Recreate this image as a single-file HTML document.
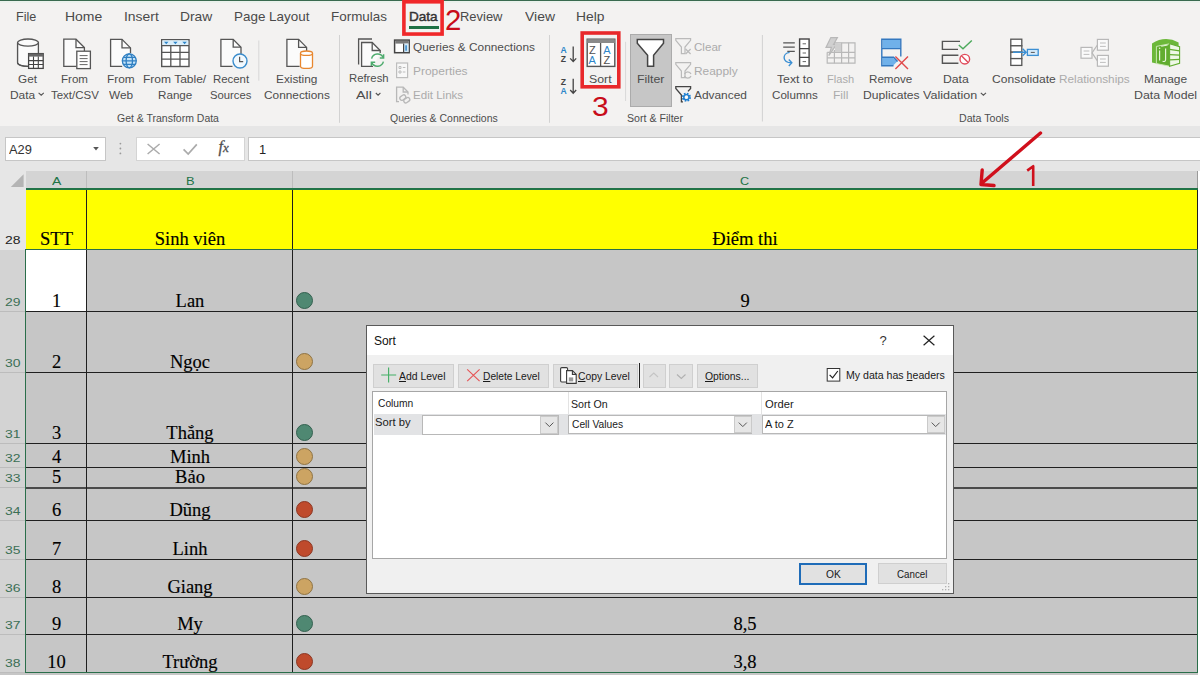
<!DOCTYPE html>
<html><head><meta charset="utf-8">
<style>
*{margin:0;padding:0;box-sizing:border-box}
html,body{width:1200px;height:675px;overflow:hidden;background:#fff;font-family:"Liberation Sans",sans-serif;position:relative}
.a{position:absolute}
.x{position:absolute;white-space:nowrap}
.c{position:absolute;width:300px;text-align:center;font-family:"Liberation Serif",serif;font-size:18.5px;line-height:18.5px;color:#000;white-space:nowrap;-webkit-text-stroke:0.15px #000}
.hl{position:absolute;height:1px;background:#1f1f1f}
.vl{position:absolute;width:1px;background:#1f1f1f}
.dot{position:absolute;width:17px;height:17px;border-radius:50%}
.g{background:#4f8872;border:1px solid #33604f}
.t{background:#cca463;border:1px solid #8f7343}
.r{background:#bf4a2c;border:1px solid #8c3622}
.btn{position:absolute;background:#e1e1e1;border:1px solid #cfcfcf}
svg{position:absolute;overflow:visible}
</style></head><body>
<!-- ribbon -->
<div class="a" style="left:0;top:0;width:1200px;height:126px;background:#f3f2f1"></div>
<div class="a" style="left:0;top:0;width:1200px;height:1px;background:#3a6a50"></div>
<div class="a" style="left:0;top:1px;width:1200px;height:2px;background:#eaf1ec"></div>
<div class="a" style="left:409px;top:26px;width:30px;height:3px;background:#1e7145"></div>
<div class="a" style="left:630px;top:33.5px;width:42px;height:73.5px;background:#c6c6c6;border:1px solid #ababab"></div>

<svg style="left:0;top:0" width="1200" height="126" viewBox="0 0 1200 126">
<g fill="none" stroke-linejoin="miter">
<!-- separators -->
<path d="M258.8 40.5 V80.7 M625.6 41.8 V101" stroke="#d8d8d8" stroke-width="1"/>
<path d="M339.5 35 V122.8 M549.5 35 V122.8 M762.4 35 V121.5" stroke="#d2d2d2" stroke-width="1"/>

<!-- Get Data -->
<g stroke="#555" stroke-width="1.3">
<path d="M17.6 42.6 V62.8 A10.4 3.6 0 0 0 28 66.4" fill="#fbfbfb"/>
<path d="M17.6 42.6 V62.8 H28 V53.2 H38.4 V42.6 Z" fill="#fbfbfb" stroke="none"/>
<path d="M17.6 42.6 V62.8 A10.4 3.6 0 0 0 28 66.4 M38.4 42.6 V53"/>
<ellipse cx="28" cy="42.6" rx="10.4" ry="3.6" fill="#fbfbfb"/>
<rect x="28.6" y="53.6" width="14.6" height="14.8" fill="#fff" stroke="#444"/>
<rect x="28.6" y="53.6" width="14.6" height="3" fill="#666" stroke="none"/>
<path d="M33.5 56.6 V68.4 M38.3 56.6 V68.4 M28.6 60.6 H43.2 M28.6 64.5 H43.2" stroke="#444" stroke-width="1.1"/>
</g>

<!-- Text/CSV -->
<g stroke="#555" stroke-width="1.3">
<path d="M76.4 66.4 H63.8 V39.2 H76 L84.4 47.6 V51" fill="#fbfbfb"/>
<path d="M76 39.2 V47.6 H84.4"/>
<rect x="76.8" y="51.2" width="13.6" height="17.4" fill="#fff"/>
<path d="M79.6 55.6 H87.6 M79.6 58.6 H87.6 M79.6 61.6 H87.6 M79.6 64.6 H87.6" stroke="#666" stroke-width="1"/>
</g>

<!-- From Web -->
<g stroke="#555" stroke-width="1.3">
<path d="M122.2 66.4 H110.6 V39.4 H122 L130.5 47.9 V53" fill="#fbfbfb"/>
<path d="M122 39.4 V47.9 H130.5"/>
</g>
<g stroke="#2f7fc2" stroke-width="1.3">
<circle cx="129.3" cy="60.8" r="7" fill="#c4e3f8"/>
<ellipse cx="129.3" cy="60.8" rx="3.2" ry="7"/>
<path d="M122.3 60.8 H136.3 M123.3 57.3 H135.3 M123.3 64.3 H135.3"/>
</g>

<!-- From Table -->
<g stroke="#555" stroke-width="1.4">
<rect x="161.7" y="39.7" width="27.3" height="26.8" fill="#fff"/>
<rect x="162.4" y="40.4" width="25.9" height="5" fill="#d9eefb" stroke="none"/>
<path d="M161.7 45.7 H189 M161.7 52.3 H189 M161.7 59.2 H189 M170.8 45.7 V66.5 M180 45.7 V66.5" stroke-width="1.3"/>
</g>
<path d="M164 41.8 H168.5 L166.25 44.3 Z M173.15 41.8 H177.65 L175.4 44.3 Z M182.35 41.8 H186.85 L184.6 44.3 Z" fill="#2f86c9"/>

<!-- Recent Sources -->
<g stroke="#555" stroke-width="1.3">
<path d="M232.5 66.4 H220.9 V39.4 H233.2 L241 47.2 V54" fill="#fbfbfb"/>
<path d="M233.2 39.4 V47.2 H241"/>
</g>
<circle cx="240" cy="61" r="7" fill="#f2f9fe" stroke="#3a8ccc" stroke-width="1.4"/>
<path d="M239.6 56.8 V61.6 H243.2" stroke="#555" stroke-width="1.2"/>

<!-- Existing Connections -->
<g stroke="#555" stroke-width="1.3">
<path d="M299.6 66.4 H286.9 V39.4 H298.6 L306.6 47.4 V51.5" fill="#fbfbfb"/>
<path d="M298.6 39.4 V47.4 H306.6"/>
</g>
<g stroke="#e8872f" stroke-width="1.3" fill="#fff">
<path d="M300.5 53.2 V66.2 A6 2.2 0 0 0 312.5 66.2 V53.2"/>
<ellipse cx="306.5" cy="53.2" rx="6" ry="2.2"/>
</g>

<!-- Refresh All -->
<g stroke="#555" stroke-width="1.3">
<path d="M358.6 64.6 V39 H372"/>
<path d="M373 66.4 H361.6 V42.5 H372.2 L380.2 50.5 V53" fill="#fbfbfb"/>
<path d="M372.2 42.5 V50.5 H380.2"/>
</g>
<g stroke="#4dab6d" stroke-width="1.5" fill="none">
<path d="M371.6 58.6 A6.2 6.2 0 0 1 383.2 57.6"/>
<path d="M383.4 61.6 A6.2 6.2 0 0 1 371.8 62.6"/>
<path d="M383.6 54.2 V58 H379.8 M371.4 66 V62.2 H375.2"/>
</g>

<!-- Queries & Connections -->
<g stroke="#444" stroke-width="1.5">
<rect x="394.6" y="40.1" width="14.6" height="12.6" fill="#fff"/>
<rect x="395.3" y="40.8" width="13.2" height="2.8" fill="#7a7a7a" stroke="none"/>
<rect x="403.6" y="43.6" width="4.9" height="8.4" fill="#cfe7f7" stroke="none"/>
<path d="M403.6 43.6 V52.7" stroke-width="1.2"/>
</g>
<rect x="405.3" y="45.3" width="1.6" height="5.4" fill="#3a8ccc"/>
<!-- Properties (gray) -->
<g stroke="#bdbdbd" stroke-width="1.2">
<rect x="396.6" y="63" width="11" height="14.6" fill="#f8f8f8"/>
<path d="M399 66.5 h2 v2 h-2z M399 71 h2 v2 h-2z M402.8 67.5 h2.6 M402.8 72 h2.6" stroke-width="1"/>
</g>
<!-- Edit Links (gray) -->
<g stroke="#b8b8b8" stroke-width="1.3" fill="none">
<path d="M399 101.6 H396.6 V87.2 H403.2 L408 92 V94.5"/>
<path d="M403.2 87.2 V92 H408"/>
<rect x="399.6" y="95.6" width="6.4" height="4" rx="2" transform="rotate(-35 402.8 97.6)"/>
<rect x="403.6" y="98.2" width="6.4" height="4" rx="2" transform="rotate(-35 406.8 100.2)"/>
</g>
<!-- AZ / ZA -->
<g font-family="Liberation Sans" font-size="8.6" font-weight="bold">
<text x="560.6" y="53.4" fill="#2e86c9">A</text>
<text x="560.8" y="62.3" fill="#444">Z</text>
<text x="560.8" y="85.1" fill="#444">Z</text>
<text x="560.6" y="94.3" fill="#2e86c9">A</text>
</g>
<path d="M573.2 46.6 V61.4 M570.2 58.4 L573.2 61.6 L576.2 58.4 M573.2 78.8 V93 M570.2 90 L573.2 93.2 L576.2 90" stroke="#444" stroke-width="1.3" fill="none"/>

<!-- Sort icon -->
<rect x="587.2" y="39.2" width="27.6" height="27.2" fill="#fff" stroke="#555" stroke-width="1.4"/>
<rect x="587.2" y="39.2" width="27.6" height="3.8" fill="#8a8a8a"/>
<path d="M600.6 43 V66.4" stroke="#555" stroke-width="1.3"/>
<g font-family="Liberation Sans" font-size="11">
<text x="589" y="53.9" fill="#505050">Z</text>
<text x="588.6" y="63.9" fill="#2e86c9">A</text>
<text x="603.2" y="53.9" fill="#2e86c9">A</text>
<text x="603.6" y="63.9" fill="#505050">Z</text>
</g>

<!-- Filter funnel -->
<path d="M637.3 39.6 H663.5 V43.2 L653.6 55.2 V66.2 H647.6 V55.2 L637.3 43.2 Z" fill="#fff" stroke="#444" stroke-width="1.5"/>
<!-- Clear (gray) -->
<g stroke="#bababa" stroke-width="1.2" fill="none">
<path d="M675.8 38.6 H690.6 V40.4 L685 47 V53.6 H681.4 V47 L675.8 40.4 Z"/>
<path d="M685.6 49 L690.6 54 M690.6 49 L685.6 54"/>
</g>
<!-- Reapply (gray) -->
<g stroke="#bababa" stroke-width="1.2" fill="none">
<path d="M675.8 62.6 H690.6 V64.4 L685 71 V77.6 H681.4 V71 L675.8 64.4 Z"/>
<path d="M684.5 74 a3.5 3.5 0 0 1 6.5 0 M691 76 a3.5 3.5 0 0 1 -6.5 0"/>
</g>
<!-- Advanced -->
<g stroke="#444" stroke-width="1.3" fill="none">
<path d="M683 101.8 H681.4 V95 L675.8 88.4 V86.6 H690.6 V88.4 L688 91.4"/>
</g>
<circle cx="686.4" cy="97.2" r="3.4" fill="none" stroke="#1f7fd0" stroke-width="2.4" stroke-dasharray="1.5 1.17"/>
<circle cx="686.4" cy="97.2" r="2.6" fill="none" stroke="#1f7fd0" stroke-width="1.4"/>
<circle cx="686.4" cy="97.2" r="1" fill="#fff"/>

<!-- Text to Columns -->
<path d="M783.2 42.8 H794.8 M783.2 47.1 H794.8 M787.3 51.3 H794.8" stroke="#555" stroke-width="1.3"/>
<rect x="799.6" y="39" width="9.5" height="27" fill="#fff" stroke="#444" stroke-width="1.4"/>
<path d="M799.6 48.6 H809.1 M799.6 57.3 H809.1" stroke="#444" stroke-width="1.2"/>
<path d="M802.6 43.8 H806 M802.6 53 H806 M802.6 61.6 H806" stroke="#666" stroke-width="1"/>
<path d="M789.6 52.4 C782 53.5 782 62.8 791.5 62.8 M788.8 59.6 L791.8 62.8 L788.8 66" stroke="#3b8fd3" stroke-width="1.4" fill="none"/>

<!-- Flash Fill (gray) -->
<g stroke="#b8b8b8" stroke-width="1.2" fill="none">
<path d="M832 42.8 H855 V63.2 H827.2 V52.3" />
<path d="M827.2 52.3 H855 M827.2 57.8 H855 M841.6 42.8 V63.2 M848.6 42.8 V63.2 M834.4 50 V63.2"/>
<path d="M830.8 37.6 H837.4 L833.6 44.4 H836.6 L828.8 55.6 L831.4 47.4 H826 Z" fill="#d0d0d0"/>
<rect x="835" y="43.5" width="6.2" height="8.4" fill="#cfcfcf" stroke="none"/>
</g>

<!-- Remove Duplicates -->
<rect x="882.5" y="39.9" width="17.6" height="8.6" fill="#70b1ea"/>
<path d="M882.5 57.9 H893.2 L897.2 61.6 L893.2 65.4 H882.5 Z" fill="#70b1ea"/>
<path d="M893.5 65.8 H881.8 V39.2 H900.8 V56.4 M881.8 48.6 H900.8 M881.8 57.3 H893.6 L897.6 61.6" stroke="#3478bf" stroke-width="1.4" fill="none"/>
<path d="M895.4 56.6 L908 69 M908 56.6 L895.4 69" stroke="#e0494a" stroke-width="1.4"/>

<!-- Data Validation -->
<path d="M960 41.4 H942.4 V49.4 H958" stroke="#555" stroke-width="1.4" fill="none"/>
<path d="M958.4 55.2 H942.4 V63.2 H958.4" stroke="#555" stroke-width="1.4" fill="none"/>
<path d="M958.8 45 L963 48.8 L971.8 40.4" stroke="#4caa5c" stroke-width="1.4" fill="none"/>
<circle cx="964.8" cy="59.2" r="4.8" fill="#fff" stroke="#e04a5a" stroke-width="1.4"/>
<path d="M961.4 55.8 L968.2 62.6" stroke="#e04a5a" stroke-width="1.4"/>

<!-- Consolidate -->
<g stroke="#555" stroke-width="1.3" fill="#fff">
<rect x="1010.8" y="39.2" width="11" height="6.6"/>
<rect x="1010.8" y="45.8" width="11" height="6.4"/>
<rect x="1010.8" y="52.2" width="11" height="6.4"/>
<rect x="1010.8" y="58.6" width="11" height="6.8"/>
</g>
<path d="M1013 52.3 H1026 M1022.6 48.8 L1026.2 52.3 L1022.6 55.8" stroke="#3b8fd3" stroke-width="1.4" fill="none"/>
<rect x="1027.4" y="49.4" width="10.8" height="6" fill="#d6ebfa" stroke="#3b8fd3" stroke-width="1.3"/>
<path d="M1030.8 52.4 H1034.8" stroke="#555" stroke-width="1"/>

<!-- Relationships (gray) -->
<g stroke="#b8b8b8" stroke-width="1.2" fill="#fafafa">
<rect x="1081" y="47.4" width="11" height="10.8"/>
<rect x="1097.4" y="39.4" width="11" height="10.8"/>
<rect x="1097.4" y="55.4" width="11" height="10.8"/>
<path d="M1092 52.8 L1097.4 45 M1092 52.8 L1097.4 60.8" fill="none"/>
<path d="M1083.6 51 h5.8 M1083.6 54.4 h5.8 M1100 43 h5.8 M1100 46.4 h5.8 M1100 59 h5.8 M1100 62.4 h5.8" fill="none" stroke-width="0.9"/>
</g>

<!-- Manage Data Model -->
<path d="M1152 62.5 V43.5 Q1165 35.2 1178.6 42.4 V47.2 L1169.6 43.8 L1156.4 46.4 V63.6 Z" fill="#6cb83a"/>
<path d="M1156.4 46.4 L1169.6 43.8 V66.2 L1156.4 63.6 Z" fill="#62ad30" stroke="#cdebb6" stroke-width="0.9"/>
<path d="M1169.6 43.8 L1179.6 46.6 V63.4 L1169.6 66.2 Z" fill="#eef8e6" stroke="#62ad30" stroke-width="1.1"/>
<path d="M1169.6 49.4 L1179.6 50.8 M1169.6 54.6 L1179.6 55.2 M1169.6 59.8 L1179.6 59.4" stroke="#62ad30" stroke-width="1.3"/>
<path d="M1159.6 50.6 V60.4 M1165.6 48.6 V59.6 Q1165.6 62 1162.6 61.4" stroke="#e6f5da" stroke-width="1.2" fill="none"/>
<circle cx="1159.6" cy="48.3" r="0.8" fill="#e6f5da"/>
<path d="M1161.2 46.2 L1167.6 45" stroke="#e6f5da" stroke-width="1.1"/>

<!-- chevrons -->
<path d="M38.6 92.8 L41.2 95.2 L43.8 92.8 M375.8 93 L378.1 95.2 L380.4 93 M980.8 92.8 L983.4 95.2 L986 92.8" stroke="#555" stroke-width="1.1" fill="none"/>
</g>
<!-- red annotation boxes -->
<rect x="403.9" y="1.8" width="38.2" height="32.25" fill="none" stroke="#f0282a" stroke-width="3.6"/>
<rect x="582.2" y="33" width="36.6" height="53.8" fill="none" stroke="#e8282b" stroke-width="3.6"/>
</svg>

<!-- formula bar area -->
<div class="a" style="left:0;top:126px;width:1200px;height:45px;background:#e6e6e6"></div>
<div class="a" style="left:5px;top:137px;width:100.5px;height:24px;background:#fff;border:1px solid #c6c6c6"></div>
<svg style="left:0;top:0" width="1" height="1"><path d="M93.2 147 H98.8 L96 150.4 Z" fill="#555"/></svg>
<svg style="left:0;top:0" width="1" height="1"><g fill="#9a9a9a"><circle cx="120.4" cy="143.6" r="0.9"/><circle cx="120.4" cy="148.5" r="0.9"/><circle cx="120.4" cy="153.4" r="0.9"/></g></svg>
<div class="a" style="left:135.6px;top:137px;width:109px;height:24px;background:#fff;border:1px solid #d4d4d4"></div>
<div class="a" style="left:247.5px;top:137px;width:953px;height:24px;background:#fff;border:1px solid #c6c6c6;border-right:none"></div>
<svg style="left:0;top:0" width="1" height="1">
<path d="M147.6 144 L159.6 154 M159.6 144 L147.6 154" stroke="#ababab" stroke-width="1.5"/>
<path d="M183.6 149.4 L188.2 154 L196.8 144.4" stroke="#ababab" stroke-width="1.7" fill="none"/>
</svg>
<div class="x" style="left:218.5px;top:139px;font-family:'Liberation Serif';font-style:italic;font-size:16px;color:#505050;line-height:16px;-webkit-text-stroke:0.3px #505050">f<span style="font-size:13px">x</span></div>

<!-- sheet -->
<div class="a" style="left:0;top:171px;width:1200px;height:504px;background:#c6c6c6"></div>
<div class="a" style="left:0;top:171px;width:26px;height:79px;background:#e6e6e6"></div>
<div class="a" style="left:26px;top:171px;width:1172px;height:17px;background:#d4d4d4"></div>
<svg style="left:0;top:0" width="1" height="1"><path d="M23.6 174.2 V187 H10.8 Z" fill="#b4b4b4"/></svg>
<div class="a" style="left:26px;top:188px;width:1172px;height:2px;background:#217346"></div>
<div class="a" style="left:86px;top:171px;width:1px;height:17px;background:#bdbdbd"></div>
<div class="a" style="left:292px;top:171px;width:1px;height:17px;background:#bdbdbd"></div>
<div class="a" style="left:1197px;top:171px;width:1px;height:17px;background:#9a9a9a"></div>
<div class="a" style="left:1198px;top:171px;width:2px;height:504px;background:#fff"></div>
<div class="a" style="left:26px;top:190px;width:1172px;height:59px;background:#ffff00"></div>
<div class="a" style="left:0;top:250px;width:25px;height:62px;background:#d3d3d3;border-bottom:1px solid #bcbcbc"></div>
<div class="a" style="left:0;top:312px;width:25px;height:61px;background:#d3d3d3;border-bottom:1px solid #bcbcbc"></div>
<div class="a" style="left:0;top:373px;width:25px;height:71px;background:#d3d3d3;border-bottom:1px solid #bcbcbc"></div>
<div class="a" style="left:0;top:444px;width:25px;height:24px;background:#d3d3d3;border-bottom:1px solid #bcbcbc"></div>
<div class="a" style="left:0;top:468px;width:25px;height:20px;background:#d3d3d3;border-bottom:1px solid #bcbcbc"></div>
<div class="a" style="left:0;top:488px;width:25px;height:33px;background:#d3d3d3;border-bottom:1px solid #bcbcbc"></div>
<div class="a" style="left:0;top:521px;width:25px;height:39px;background:#d3d3d3;border-bottom:1px solid #bcbcbc"></div>
<div class="a" style="left:0;top:560px;width:25px;height:38px;background:#d3d3d3;border-bottom:1px solid #bcbcbc"></div>
<div class="a" style="left:0;top:598px;width:25px;height:37px;background:#d3d3d3;border-bottom:1px solid #bcbcbc"></div>
<div class="a" style="left:0;top:635px;width:25px;height:38px;background:#d3d3d3;border-bottom:1px solid #bcbcbc"></div>
<div class="a" style="left:26px;top:250px;width:60px;height:61px;background:#fff"></div>
<div class="dot g" style="left:295.5px;top:291.5px"></div>
<div class="hl" style="left:26px;top:311px;width:1171px"></div>
<div class="dot t" style="left:295.5px;top:352.5px"></div>
<div class="hl" style="left:26px;top:372px;width:1171px"></div>
<div class="dot g" style="left:295.5px;top:423.5px"></div>
<div class="hl" style="left:26px;top:443px;width:1171px"></div>
<div class="dot t" style="left:295.5px;top:447.5px"></div>
<div class="hl" style="left:26px;top:467px;width:1171px"></div>
<div class="dot t" style="left:295.5px;top:467.5px"></div>
<div class="hl" style="left:26px;top:487px;width:1171px;height:2px;background:#4a4a4a"></div>
<div class="dot r" style="left:295.5px;top:500.5px"></div>
<div class="hl" style="left:26px;top:520px;width:1171px"></div>
<div class="dot r" style="left:295.5px;top:539.5px"></div>
<div class="hl" style="left:26px;top:559px;width:1171px"></div>
<div class="dot t" style="left:295.5px;top:577.5px"></div>
<div class="hl" style="left:26px;top:597px;width:1171px"></div>
<div class="dot g" style="left:295.5px;top:614.5px"></div>
<div class="hl" style="left:26px;top:634px;width:1171px"></div>
<div class="dot r" style="left:295.5px;top:652.5px"></div>
<div class="vl" style="left:86px;top:190px;height:482px"></div>
<div class="vl" style="left:292px;top:190px;height:482px"></div>
<div class="a" style="left:1197px;top:190px;width:1px;height:60px;background:#1f1f1f"></div>
<div class="a" style="left:25px;top:249px;width:1173px;height:424px;border:1px solid #2a6e4a;border-top:1.5px solid #2a6e4a"></div>
<div class="c" style="left:-93.5px;top:230px">STT</div>
<div class="c" style="left:40px;top:230px">Sinh viên</div>
<div class="c" style="left:595px;top:230px">Điểm thi</div>
<div class="c" style="left:-93.5px;top:292px">1</div>
<div class="c" style="left:40px;top:292px">Lan</div>
<div class="c" style="left:595px;top:292px">9</div>
<div class="c" style="left:-93.5px;top:353px">2</div>
<div class="c" style="left:40px;top:353px">Ngọc</div>
<div class="c" style="left:-93.5px;top:424px">3</div>
<div class="c" style="left:40px;top:424px">Thắng</div>
<div class="c" style="left:-93.5px;top:448px">4</div>
<div class="c" style="left:40px;top:448px">Minh</div>
<div class="c" style="left:-93.5px;top:468px">5</div>
<div class="c" style="left:40px;top:468px">Bảo</div>
<div class="c" style="left:-93.5px;top:501px">6</div>
<div class="c" style="left:40px;top:501px">Dũng</div>
<div class="c" style="left:-93.5px;top:540px">7</div>
<div class="c" style="left:40px;top:540px">Linh</div>
<div class="c" style="left:-93.5px;top:578px">8</div>
<div class="c" style="left:40px;top:578px">Giang</div>
<div class="c" style="left:595px;top:578px">7</div>
<div class="c" style="left:-93.5px;top:615px">9</div>
<div class="c" style="left:40px;top:615px">My</div>
<div class="c" style="left:595px;top:615px">8,5</div>
<div class="c" style="left:-93.5px;top:653px">10</div>
<div class="c" style="left:40px;top:653px">Trường</div>
<div class="c" style="left:595px;top:653px">3,8</div>

<!-- dialog -->
<div class="a" style="left:366px;top:325px;width:588px;height:269px;background:#f0f0f0;border:1px solid #595959"></div>
<div class="a" style="left:367px;top:326px;width:586px;height:29px;background:#fff"></div>
<svg style="left:0;top:0" width="1" height="1"><path d="M923.6 335.8 L934.4 345.2 M934.4 335.8 L923.6 345.2" stroke="#222" stroke-width="1.2"/></svg>
<div class="btn" style="left:373px;top:363.5px;width:81px;height:24px"></div>
<div class="btn" style="left:457.5px;top:363.5px;width:91.5px;height:24px"></div>
<div class="btn" style="left:552.5px;top:363.5px;width:85.5px;height:24px"></div>
<div class="a" style="left:638.8px;top:363px;width:1.2px;height:25px;background:#222"></div>
<div class="btn" style="left:642.5px;top:363.5px;width:23.5px;height:24px"></div>
<div class="btn" style="left:669.3px;top:363.5px;width:24px;height:24px"></div>
<div class="btn" style="left:697.3px;top:363.5px;width:61px;height:24px"></div>
<svg style="left:0;top:0" width="1" height="1">
<path d="M388.6 367.6 V382.4 M381.2 375 H396.2" stroke="#45b066" stroke-width="1.15"/>
<path d="M467.2 369.4 L479.6 381.2 M479.6 369.4 L467.2 381.2" stroke="#e65557" stroke-width="1.15"/>
<g stroke="#3a3a3a" stroke-width="1.1" fill="#fff">
<rect x="560.6" y="367.6" width="7" height="14.4" rx="1.2"/>
<path d="M566.6 370.6 H572.4 L576.2 374.4 V383.4 H566.6 Z"/>
<path d="M572.4 370.6 V374.4 H576.2" fill="none"/>
</g>
<rect x="568.8" y="377.4" width="4.4" height="4" fill="#9a9a9a"/>
<path d="M649.5 377 L653.8 373 L658 377" stroke="#c4c4c4" stroke-width="1.1" fill="none"/>
<path d="M677 374.5 L681.3 378.5 L685.5 374.5" stroke="#b0b0b0" stroke-width="1.1" fill="none"/>
<rect x="827.2" y="368.5" width="12.6" height="12.6" fill="#fff" stroke="#333" stroke-width="1"/>
<path d="M829.6 374.8 L832.6 377.8 L837.8 371" stroke="#222" stroke-width="1.2" fill="none"/>
</svg>
<div class="a" style="left:372.4px;top:391.4px;width:575px;height:167.4px;background:#fff;border:1px solid #a6a6a6"></div>
<div class="a" style="left:567.6px;top:392.4px;width:1px;height:22px;background:#e3e3e3"></div>
<div class="a" style="left:761px;top:392.4px;width:1px;height:22px;background:#e3e3e3"></div>
<div class="a" style="left:374px;top:414.3px;width:572px;height:20.5px;background:#e2e3e5"></div>
<div class="a" style="left:422.2px;top:415.3px;width:136.8px;height:19.4px;background:#fff;border:1px solid #b8b8b8"></div>
<div class="a" style="left:540.4px;top:416.2px;width:18px;height:17.6px;background:#e6e6e6;border:1px solid #cacaca"></div>
<div class="a" style="left:568.4px;top:415px;width:183.2px;height:19.4px;background:#fff;border:1px solid #b8b8b8"></div>
<div class="a" style="left:734px;top:415.8px;width:17.6px;height:17.6px;background:#e6e6e6;border:1px solid #cacaca"></div>
<div class="a" style="left:762px;top:415px;width:183px;height:19.4px;background:#fff;border:1px solid #b8b8b8"></div>
<div class="a" style="left:926.7px;top:415.8px;width:18px;height:17.6px;background:#e6e6e6;border:1px solid #cacaca"></div>
<svg style="left:0;top:0" width="1" height="1">
<path d="M545.4 422.6 L549.4 426.6 L553.4 422.6 M738.8 422.6 L742.8 426.6 L746.8 422.6 M931.7 422.6 L935.7 426.6 L939.7 422.6" stroke="#555" stroke-width="1" fill="none"/>
</svg>
<div class="a" style="left:798.75px;top:563.2px;width:68px;height:21.4px;background:#e1e1e1;border:2px solid #1f6cb8"></div>
<div class="btn" style="left:878.3px;top:563.3px;width:68.4px;height:21.1px"></div>
<svg style="left:0;top:0" width="1" height="1"><g fill="#b0b0b0"><rect x="948" y="583" width="1.3" height="1.3"/><rect x="945" y="586" width="1.3" height="1.3"/><rect x="948" y="586" width="1.3" height="1.3"/><rect x="942" y="589" width="1.3" height="1.3"/><rect x="945" y="589" width="1.3" height="1.3"/><rect x="948" y="589" width="1.3" height="1.3"/></g></svg>

<div class="x" style="left:15.90px;top:10px;font-size:13.2px;line-height:13.2px;color:#4a4a4a;font-weight:normal;font-family:'Liberation Sans';transform:scaleX(0.9538);transform-origin:0 0;">File</div>
<div class="x" style="left:64.63px;top:10px;font-size:13.2px;line-height:13.2px;color:#4a4a4a;font-weight:normal;font-family:'Liberation Sans';transform:scaleX(1.0591);transform-origin:0 0;">Home</div>
<div class="x" style="left:123.83px;top:10px;font-size:13.2px;line-height:13.2px;color:#4a4a4a;font-weight:normal;font-family:'Liberation Sans';transform:scaleX(1.0541);transform-origin:0 0;">Insert</div>
<div class="x" style="left:179.84px;top:10px;font-size:13.2px;line-height:13.2px;color:#4a4a4a;font-weight:normal;font-family:'Liberation Sans';transform:scaleX(1.0483);transform-origin:0 0;">Draw</div>
<div class="x" style="left:234.06px;top:10px;font-size:13.2px;line-height:13.2px;color:#4a4a4a;font-weight:normal;font-family:'Liberation Sans';transform:scaleX(1.0176);transform-origin:0 0;">Page Layout</div>
<div class="x" style="left:331.35px;top:10px;font-size:13.2px;line-height:13.2px;color:#4a4a4a;font-weight:normal;font-family:'Liberation Sans';transform:scaleX(1.0182);transform-origin:0 0;">Formulas</div>
<div class="x" style="left:460.18px;top:10px;font-size:13.2px;line-height:13.2px;color:#4a4a4a;font-weight:normal;font-family:'Liberation Sans';transform:scaleX(0.9819);transform-origin:0 0;">Review</div>
<div class="x" style="left:524.63px;top:10px;font-size:13.2px;line-height:13.2px;color:#4a4a4a;font-weight:normal;font-family:'Liberation Sans';transform:scaleX(1.0567);transform-origin:0 0;">View</div>
<div class="x" style="left:576.14px;top:10px;font-size:13.2px;line-height:13.2px;color:#4a4a4a;font-weight:normal;font-family:'Liberation Sans';transform:scaleX(1.0495);transform-origin:0 0;">Help</div>
<div class="x" style="left:409.25px;top:10px;font-size:13.2px;line-height:13.2px;color:#333;font-weight:normal;font-family:'Liberation Sans';transform:scaleX(1.0290);transform-origin:0 0;-webkit-text-stroke:0.45px #333;">Data</div>
<div class="x" style="left:17.94px;top:73px;font-size:11.6px;line-height:11.6px;color:#4d4d4d;font-weight:normal;font-family:'Liberation Sans';transform:scaleX(1.0121);transform-origin:0 0;">Get</div>
<div class="x" style="left:9.83px;top:89px;font-size:11.6px;line-height:11.6px;color:#4d4d4d;font-weight:normal;font-family:'Liberation Sans';transform:scaleX(1.0291);transform-origin:0 0;">Data</div>
<div class="x" style="left:60.94px;top:73px;font-size:11.6px;line-height:11.6px;color:#4d4d4d;font-weight:normal;font-family:'Liberation Sans';transform:scaleX(0.9982);transform-origin:0 0;">From</div>
<div class="x" style="left:50.55px;top:89px;font-size:11.6px;line-height:11.6px;color:#4d4d4d;font-weight:normal;font-family:'Liberation Sans';transform:scaleX(0.9894);transform-origin:0 0;">Text/CSV</div>
<div class="x" style="left:106.83px;top:73px;font-size:11.6px;line-height:11.6px;color:#4d4d4d;font-weight:normal;font-family:'Liberation Sans';transform:scaleX(1.0241);transform-origin:0 0;">From</div>
<div class="x" style="left:109.03px;top:89px;font-size:11.6px;line-height:11.6px;color:#4d4d4d;font-weight:normal;font-family:'Liberation Sans';transform:scaleX(1.0200);transform-origin:0 0;">Web</div>
<div class="x" style="left:142.92px;top:73px;font-size:11.6px;line-height:11.6px;color:#4d4d4d;font-weight:normal;font-family:'Liberation Sans';transform:scaleX(1.0363);transform-origin:0 0;">From Table/</div>
<div class="x" style="left:157.84px;top:89px;font-size:11.6px;line-height:11.6px;color:#4d4d4d;font-weight:normal;font-family:'Liberation Sans';transform:scaleX(1.0041);transform-origin:0 0;">Range</div>
<div class="x" style="left:212.95px;top:73px;font-size:11.6px;line-height:11.6px;color:#4d4d4d;font-weight:normal;font-family:'Liberation Sans';transform:scaleX(0.9831);transform-origin:0 0;">Recent</div>
<div class="x" style="left:210.36px;top:89px;font-size:11.6px;line-height:11.6px;color:#4d4d4d;font-weight:normal;font-family:'Liberation Sans';transform:scaleX(0.9714);transform-origin:0 0;">Sources</div>
<div class="x" style="left:275.93px;top:73px;font-size:11.6px;line-height:11.6px;color:#4d4d4d;font-weight:normal;font-family:'Liberation Sans';transform:scaleX(1.0198);transform-origin:0 0;">Existing</div>
<div class="x" style="left:263.73px;top:89px;font-size:11.6px;line-height:11.6px;color:#4d4d4d;font-weight:normal;font-family:'Liberation Sans';transform:scaleX(1.0211);transform-origin:0 0;">Connections</div>
<div class="x" style="left:349.06px;top:72px;font-size:11.6px;line-height:11.6px;color:#4d4d4d;font-weight:normal;font-family:'Liberation Sans';transform:scaleX(0.9755);transform-origin:0 0;">Refresh</div>
<div class="x" style="left:355.91px;top:89px;font-size:11.6px;line-height:11.6px;color:#4d4d4d;font-weight:normal;font-family:'Liberation Sans';transform:scaleX(1.2423);transform-origin:0 0;">All</div>
<div class="x" style="left:412.93px;top:41px;font-size:11.6px;line-height:11.6px;color:#4d4d4d;font-weight:normal;font-family:'Liberation Sans';transform:scaleX(1.0225);transform-origin:0 0;">Queries &amp; Connections</div>
<div class="x" style="left:412.93px;top:65px;font-size:11.6px;line-height:11.6px;color:#ababab;font-weight:normal;font-family:'Liberation Sans';transform:scaleX(1.0316);transform-origin:0 0;">Properties</div>
<div class="x" style="left:412.94px;top:89px;font-size:11.6px;line-height:11.6px;color:#ababab;font-weight:normal;font-family:'Liberation Sans';transform:scaleX(0.9970);transform-origin:0 0;">Edit Links</div>
<div class="x" style="left:588.81px;top:73px;font-size:11.6px;line-height:11.6px;color:#4d4d4d;font-weight:normal;font-family:'Liberation Sans';transform:scaleX(1.0634);transform-origin:0 0;">Sort</div>
<div class="x" style="left:637.11px;top:73px;font-size:11.6px;line-height:11.6px;color:#4d4d4d;font-weight:normal;font-family:'Liberation Sans';transform:scaleX(1.0640);transform-origin:0 0;">Filter</div>
<div class="x" style="left:694.34px;top:41px;font-size:11.6px;line-height:11.6px;color:#ababab;font-weight:normal;font-family:'Liberation Sans';transform:scaleX(0.9998);transform-origin:0 0;">Clear</div>
<div class="x" style="left:694.33px;top:65px;font-size:11.6px;line-height:11.6px;color:#ababab;font-weight:normal;font-family:'Liberation Sans';transform:scaleX(1.0274);transform-origin:0 0;">Reapply</div>
<div class="x" style="left:694.33px;top:89px;font-size:11.6px;line-height:11.6px;color:#4d4d4d;font-weight:normal;font-family:'Liberation Sans';transform:scaleX(1.0259);transform-origin:0 0;">Advanced</div>
<div class="x" style="left:776.81px;top:73px;font-size:11.6px;line-height:11.6px;color:#4d4d4d;font-weight:normal;font-family:'Liberation Sans';transform:scaleX(1.0529);transform-origin:0 0;">Text to</div>
<div class="x" style="left:771.94px;top:89px;font-size:11.6px;line-height:11.6px;color:#4d4d4d;font-weight:normal;font-family:'Liberation Sans';transform:scaleX(1.0014);transform-origin:0 0;">Columns</div>
<div class="x" style="left:826.97px;top:73px;font-size:11.6px;line-height:11.6px;color:#ababab;font-weight:normal;font-family:'Liberation Sans';transform:scaleX(0.9561);transform-origin:0 0;">Flash</div>
<div class="x" style="left:832.72px;top:89px;font-size:11.6px;line-height:11.6px;color:#ababab;font-weight:normal;font-family:'Liberation Sans';transform:scaleX(1.0406);transform-origin:0 0;">Fill</div>
<div class="x" style="left:869.44px;top:73px;font-size:11.6px;line-height:11.6px;color:#4d4d4d;font-weight:normal;font-family:'Liberation Sans';transform:scaleX(1.0033);transform-origin:0 0;">Remove</div>
<div class="x" style="left:863.02px;top:89px;font-size:11.6px;line-height:11.6px;color:#4d4d4d;font-weight:normal;font-family:'Liberation Sans';transform:scaleX(1.0457);transform-origin:0 0;">Duplicates</div>
<div class="x" style="left:942.71px;top:73px;font-size:11.6px;line-height:11.6px;color:#4d4d4d;font-weight:normal;font-family:'Liberation Sans';transform:scaleX(1.0536);transform-origin:0 0;">Data</div>
<div class="x" style="left:922.60px;top:89px;font-size:11.6px;line-height:11.6px;color:#4d4d4d;font-weight:normal;font-family:'Liberation Sans';transform:scaleX(1.0829);transform-origin:0 0;">Validation</div>
<div class="x" style="left:991.82px;top:73px;font-size:11.6px;line-height:11.6px;color:#4d4d4d;font-weight:normal;font-family:'Liberation Sans';transform:scaleX(1.0405);transform-origin:0 0;">Consolidate</div>
<div class="x" style="left:1059.43px;top:73px;font-size:11.6px;line-height:11.6px;color:#ababab;font-weight:normal;font-family:'Liberation Sans';transform:scaleX(1.0159);transform-origin:0 0;">Relationships</div>
<div class="x" style="left:1144.43px;top:73px;font-size:11.6px;line-height:11.6px;color:#4d4d4d;font-weight:normal;font-family:'Liberation Sans';transform:scaleX(1.0288);transform-origin:0 0;">Manage</div>
<div class="x" style="left:1134.41px;top:89px;font-size:11.6px;line-height:11.6px;color:#4d4d4d;font-weight:normal;font-family:'Liberation Sans';transform:scaleX(1.0644);transform-origin:0 0;">Data Model</div>
<div class="x" style="left:117.30px;top:114px;font-size:10px;line-height:10px;color:#4d4d4d;font-weight:normal;font-family:'Liberation Sans';transform:scaleX(1.0483);transform-origin:0 0;">Get &amp; Transform Data</div>
<div class="x" style="left:389.90px;top:114px;font-size:10px;line-height:10px;color:#4d4d4d;font-weight:normal;font-family:'Liberation Sans';transform:scaleX(1.0478);transform-origin:0 0;">Queries &amp; Connections</div>
<div class="x" style="left:626.89px;top:114px;font-size:10px;line-height:10px;color:#4d4d4d;font-weight:normal;font-family:'Liberation Sans';transform:scaleX(1.0618);transform-origin:0 0;">Sort &amp; Filter</div>
<div class="x" style="left:959.49px;top:114px;font-size:10px;line-height:10px;color:#4d4d4d;font-weight:normal;font-family:'Liberation Sans';transform:scaleX(1.0612);transform-origin:0 0;">Data Tools</div>
<div class="x" style="left:9.38px;top:144px;font-size:12px;line-height:12px;color:#333;font-weight:normal;font-family:'Liberation Sans';transform:scaleX(1.0699);transform-origin:0 0;">A29</div>
<div class="x" style="left:258.78px;top:144px;font-size:12px;line-height:12px;color:#222;font-weight:normal;font-family:'Liberation Sans';transform:scaleX(1.0695);transform-origin:0 0;">1</div>
<div class="x" style="left:52.33px;top:176px;font-size:11.5px;line-height:11.5px;color:#217346;font-weight:normal;font-family:'Liberation Sans';transform:scaleX(1.2193);transform-origin:0 0;">A</div>
<div class="x" style="left:185.63px;top:176px;font-size:11.5px;line-height:11.5px;color:#217346;font-weight:normal;font-family:'Liberation Sans';transform:scaleX(1.1215);transform-origin:0 0;">B</div>
<div class="x" style="left:740.40px;top:176px;font-size:11.5px;line-height:11.5px;color:#217346;font-weight:normal;font-family:'Liberation Sans';transform:scaleX(1.0952);transform-origin:0 0;">C</div>
<div class="x" style="left:4.93px;top:235px;font-size:11.5px;line-height:11.5px;color:#222;font-weight:normal;font-family:'Liberation Sans';transform:scaleX(1.2115);transform-origin:0 0;">28</div>
<div class="x" style="left:4.93px;top:297px;font-size:11.5px;line-height:11.5px;color:#3b6f55;font-weight:normal;font-family:'Liberation Sans';transform:scaleX(1.2115);transform-origin:0 0;">29</div>
<div class="x" style="left:4.93px;top:358px;font-size:11.5px;line-height:11.5px;color:#3b6f55;font-weight:normal;font-family:'Liberation Sans';transform:scaleX(1.2115);transform-origin:0 0;">30</div>
<div class="x" style="left:4.93px;top:429px;font-size:11.5px;line-height:11.5px;color:#3b6f55;font-weight:normal;font-family:'Liberation Sans';transform:scaleX(1.2115);transform-origin:0 0;">31</div>
<div class="x" style="left:4.93px;top:453px;font-size:11.5px;line-height:11.5px;color:#3b6f55;font-weight:normal;font-family:'Liberation Sans';transform:scaleX(1.2115);transform-origin:0 0;">32</div>
<div class="x" style="left:4.93px;top:473px;font-size:11.5px;line-height:11.5px;color:#3b6f55;font-weight:normal;font-family:'Liberation Sans';transform:scaleX(1.2115);transform-origin:0 0;">33</div>
<div class="x" style="left:4.93px;top:506px;font-size:11.5px;line-height:11.5px;color:#3b6f55;font-weight:normal;font-family:'Liberation Sans';transform:scaleX(1.2115);transform-origin:0 0;">34</div>
<div class="x" style="left:4.93px;top:545px;font-size:11.5px;line-height:11.5px;color:#3b6f55;font-weight:normal;font-family:'Liberation Sans';transform:scaleX(1.2115);transform-origin:0 0;">35</div>
<div class="x" style="left:4.93px;top:583px;font-size:11.5px;line-height:11.5px;color:#3b6f55;font-weight:normal;font-family:'Liberation Sans';transform:scaleX(1.2115);transform-origin:0 0;">36</div>
<div class="x" style="left:4.93px;top:620px;font-size:11.5px;line-height:11.5px;color:#3b6f55;font-weight:normal;font-family:'Liberation Sans';transform:scaleX(1.2115);transform-origin:0 0;">37</div>
<div class="x" style="left:4.93px;top:658px;font-size:11.5px;line-height:11.5px;color:#3b6f55;font-weight:normal;font-family:'Liberation Sans';transform:scaleX(1.2115);transform-origin:0 0;">38</div>
<div class="x" style="left:373.92px;top:335px;font-size:12px;line-height:12px;color:#111;font-weight:normal;font-family:'Liberation Sans';">Sort</div>
<div class="x" style="left:399.40px;top:371px;font-size:11px;line-height:11px;color:#1a1a1a;font-weight:normal;font-family:'Liberation Sans';transform:scaleX(0.9493);transform-origin:0 0;"><u>A</u>dd Level</div>
<div class="x" style="left:483.26px;top:371px;font-size:11px;line-height:11px;color:#1a1a1a;font-weight:normal;font-family:'Liberation Sans';transform:scaleX(0.9286);transform-origin:0 0;"><u>D</u>elete Level</div>
<div class="x" style="left:577.50px;top:371px;font-size:11px;line-height:11px;color:#1a1a1a;font-weight:normal;font-family:'Liberation Sans';transform:scaleX(0.9411);transform-origin:0 0;"><u>C</u>opy Level</div>
<div class="x" style="left:705.40px;top:371px;font-size:11px;line-height:11px;color:#1a1a1a;font-weight:normal;font-family:'Liberation Sans';transform:scaleX(0.9440);transform-origin:0 0;"><u>O</u>ptions...</div>
<div class="x" style="left:846.19px;top:370px;font-size:11px;line-height:11px;color:#1a1a1a;font-weight:normal;font-family:'Liberation Sans';transform:scaleX(0.9621);transform-origin:0 0;">My data has <u>h</u>eaders</div>
<div class="x" style="left:378.26px;top:398px;font-size:11px;line-height:11px;color:#1a1a1a;font-weight:normal;font-family:'Liberation Sans';transform:scaleX(0.9314);transform-origin:0 0;">Column</div>
<div class="x" style="left:571.49px;top:399px;font-size:11px;line-height:11px;color:#1a1a1a;font-weight:normal;font-family:'Liberation Sans';transform:scaleX(0.9670);transform-origin:0 0;">Sort On</div>
<div class="x" style="left:765.46px;top:399px;font-size:11px;line-height:11px;color:#1a1a1a;font-weight:normal;font-family:'Liberation Sans';transform:scaleX(1.0189);transform-origin:0 0;">Order</div>
<div class="x" style="left:374.96px;top:417px;font-size:11px;line-height:11px;color:#1a1a1a;font-weight:normal;font-family:'Liberation Sans';transform:scaleX(1.0200);transform-origin:0 0;">Sort by</div>
<div class="x" style="left:571.51px;top:419px;font-size:11px;line-height:11px;color:#1a1a1a;font-weight:normal;font-family:'Liberation Sans';transform:scaleX(0.9312);transform-origin:0 0;">Cell Values</div>
<div class="x" style="left:765.47px;top:419px;font-size:11px;line-height:11px;color:#1a1a1a;font-weight:normal;font-family:'Liberation Sans';transform:scaleX(0.9967);transform-origin:0 0;">A to Z</div>
<div class="x" style="left:825.76px;top:569px;font-size:11px;line-height:11px;color:#1a1a1a;font-weight:normal;font-family:'Liberation Sans';transform:scaleX(0.9308);transform-origin:0 0;">OK</div>
<div class="x" style="left:897.33px;top:569px;font-size:11px;line-height:11px;color:#1a1a1a;font-weight:normal;font-family:'Liberation Sans';transform:scaleX(0.8863);transform-origin:0 0;">Cancel</div>
<div class="x" style="left:879.38px;top:334px;font-size:13px;line-height:13px;color:#333;font-weight:normal;font-family:'Liberation Sans';">?</div>
<div class="x" style="left:444.59px;top:6px;font-size:29px;line-height:29px;color:#c80c1a;font-weight:normal;font-family:'Liberation Sans';transform:scaleX(1.0151);transform-origin:0 0;">2</div>
<div class="x" style="left:591.66px;top:94px;font-size:27px;line-height:27px;color:#c80c1a;font-weight:normal;font-family:'Liberation Sans';transform:scaleX(1.1105);transform-origin:0 0;">3</div>
<svg style="left:0;top:0" width="1" height="1">
<path d="M1040.5 133 L981.5 183.5 M981 184.5 L982.2 170 M981 184.5 L994 185.5" stroke="#d0101c" stroke-width="3.4" fill="none" stroke-linecap="round" stroke-linejoin="round"/>
<path d="M1027.2 170.6 L1033.2 166.2 V186" stroke="#d0101c" stroke-width="2.6" fill="none" stroke-linejoin="round"/>
</svg>
</body></html>
